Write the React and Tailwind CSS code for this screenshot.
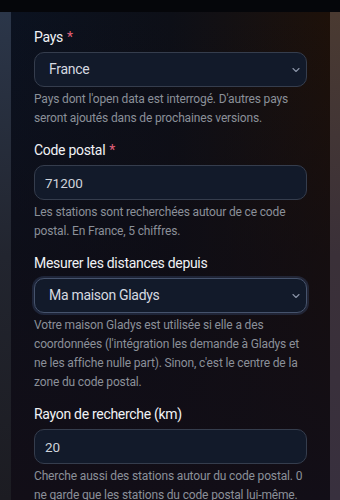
import React, { useState } from 'react';

function Chevron() {
  return (
    <svg className="pointer-events-none absolute right-[7px] top-1/2 -translate-y-1/2" width="8" height="5" viewBox="0 0 8 5" fill="none">
      <path d="M1 1l3 3 3-3" stroke="#8a93a6" strokeWidth="1.1" strokeLinecap="round" strokeLinejoin="round" />
    </svg>
  );
}

function Field({ label, required, help, children }) {
  return (
    <div className="mb-[12px]">
      <label className="block h-[20px] text-[14px] leading-[20px] tracking-[-0.3px] text-[#f0f2f5]">
        {label}
        {required && <span className="ml-[4px] text-[#e0607a]">*</span>}
      </label>
      <div className="mt-[5px]">{children}</div>
      <p className="mt-[3px] text-[12px] leading-[19px] tracking-[-0.15px] text-[#8b9099]">{help}</p>
    </div>
  );
}

export default function App() {
  const [pays, setPays] = useState('fr');
  const [cp, setCp] = useState('71200');
  const [from, setFrom] = useState('house');
  const [rayon, setRayon] = useState('20');

  return (
    <div
      className="w-[340px] h-[500px] overflow-hidden bg-[#05060a] flex flex-col"
      style={{ fontFamily: 'Roboto, "Noto Sans", sans-serif' }}
    >
      <div className="h-[12px] shrink-0 bg-[#05060a]" />
      <div className="flex flex-1 min-h-0">
        <div className="w-[11px] shrink-0 bg-gradient-to-b from-[#2b3649] via-[#22252f] to-[#1c1c22]" />
        <div className="relative flex-1 overflow-hidden bg-[#0c0f19]">
          <div className="absolute inset-0 bg-gradient-to-r from-[#0b1220] via-[#0d0f17] to-[#1e1109]" />
          <div className="absolute inset-0 bg-gradient-to-b from-transparent via-[#0f0c14]/60 to-[#120e17]" />
          <div className="relative px-[23px] pt-[15px]">
            <Field label="Pays" required help="Pays dont l'open data est interrogé. D'autres pays seront ajoutés dans de prochaines versions.">
              <div className="relative">
                <select
                  value={pays}
                  onChange={(e) => setPays(e.target.value)}
                  className="appearance-none w-full h-[35px] rounded-[10px] border border-[#353d4d] bg-[#121a2a] pl-[14px] text-[14px] tracking-[-0.3px] text-[#d6d9e0] outline-none"
                >
                  <option value="fr">France</option>
                </select>
                <Chevron />
              </div>
            </Field>

            <Field label="Code postal" required help="Les stations sont recherchées autour de ce code postal. En France, 5 chiffres.">
              <input
                value={cp}
                onChange={(e) => setCp(e.target.value)}
                className="w-full h-[35px] rounded-[10px] border border-[#353d4d] bg-[#121a2a] px-[10px] text-[13.5px] text-[#cfd3da] outline-none"
              />
            </Field>

            <Field label="Mesurer les distances depuis" help="Votre maison Gladys est utilisée si elle a des coordonnées (l'intégration les demande à Gladys et ne les affiche nulle part). Sinon, c'est le centre de la zone du code postal.">
              <div className="relative">
                <select
                  value={from}
                  onChange={(e) => setFrom(e.target.value)}
                  className="appearance-none w-full h-[35px] rounded-[10px] border border-[#46536c] bg-[#121a2a] pl-[14px] text-[14px] tracking-[-0.3px] text-[#d6d9e0] outline-none shadow-[0_0_0_2px_rgba(60,80,120,0.35)]"
                >
                  <option value="house">Ma maison Gladys</option>
                  <option value="cp">Centre du code postal</option>
                </select>
                <Chevron />
              </div>
            </Field>

            <Field label="Rayon de recherche (km)" help="Cherche aussi des stations autour du code postal. 0 ne garde que les stations du code postal lui-même.">
              <input
                value={rayon}
                onChange={(e) => setRayon(e.target.value)}
                className="w-full h-[35px] rounded-[10px] border border-[#353d4d] bg-[#121a2a] px-[10px] text-[13.5px] text-[#cfd3da] outline-none"
              />
            </Field>
          </div>
        </div>
        <div className="w-[10px] shrink-0 bg-gradient-to-b from-[#4a3a31] via-[#3a3038] to-[#38303e]" />
      </div>
    </div>
  );
}
